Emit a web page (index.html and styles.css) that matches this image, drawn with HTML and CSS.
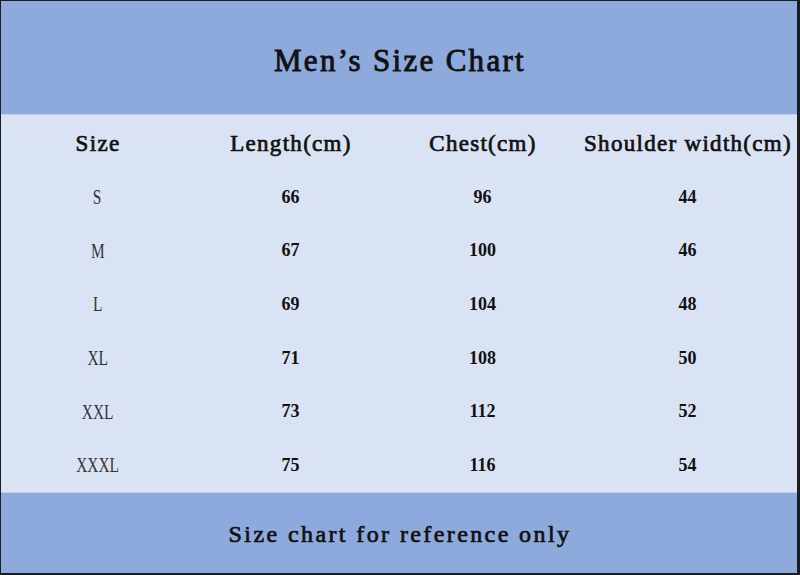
FILE: index.html
```html
<!DOCTYPE html>
<html lang="en">
<head>
<meta charset="utf-8">
<title>Men's Size Chart</title>
<link rel="stylesheet" href="styles.css">
</head>
<body>
<div class="chart">
  <header class="band band-top">
    <h1 class="title">Men’s Size Chart</h1>
  </header>
  <div class="table">
    <div class="cell head">Size</div>
    <div class="cell head">Length(cm)</div>
    <div class="cell head">Chest(cm)</div>
    <div class="cell head">Shoulder width(cm)</div>

    <div class="cell size"><span>S</span></div>
    <div class="cell num">66</div>
    <div class="cell num">96</div>
    <div class="cell num">44</div>

    <div class="cell size"><span>M</span></div>
    <div class="cell num">67</div>
    <div class="cell num">100</div>
    <div class="cell num">46</div>

    <div class="cell size"><span>L</span></div>
    <div class="cell num">69</div>
    <div class="cell num">104</div>
    <div class="cell num">48</div>

    <div class="cell size"><span>XL</span></div>
    <div class="cell num">71</div>
    <div class="cell num">108</div>
    <div class="cell num">50</div>

    <div class="cell size"><span>XXL</span></div>
    <div class="cell num">73</div>
    <div class="cell num">112</div>
    <div class="cell num">52</div>

    <div class="cell size"><span>XXXL</span></div>
    <div class="cell num">75</div>
    <div class="cell num">116</div>
    <div class="cell num">54</div>
  </div>
  <footer class="band band-bottom">
    <p class="note">Size chart for reference only</p>
  </footer>
</div>
</body>
</html>
```

FILE: styles.css
```css
html, body {
  margin: 0;
  padding: 0;
  background: #1a1a1a;
}

.chart {
  width: 800px;
  height: 575px;
  box-sizing: border-box;
  border-style: solid;
  border-color: #1c1c1c;
  border-width: 1px 3px 2px 1px;
  display: flex;
  flex-direction: column;
  color: #111;
  font-family: "Liberation Serif", "DejaVu Serif", serif;
  background: #dae3f3;
}

.band {
  background: #8eaadc;
  display: flex;
  align-items: center;
  justify-content: center;
}

.band-top {
  height: 114px;
  border-bottom: 1px solid #c3d0ea;
  box-sizing: border-box;
  padding-top: 6px;
}

.band-bottom {
  height: 81px;
  border-top: 1px solid #c3d0ea;
  box-sizing: border-box;
  padding-top: 2px;
}

.title {
  margin: 0;
  font-size: 31px;
  font-weight: normal;
  letter-spacing: 2.3px;
  line-height: 1;
  padding-left: 2px;
  -webkit-text-stroke: 0.9px #111;
}

.note {
  margin: 0;
  font-size: 24px;
  letter-spacing: 2.4px;
  line-height: 1;
  padding-left: 2px;
  -webkit-text-stroke: 0.7px #111;
}

.table {
  height: 377px;
  box-sizing: border-box;
  padding-top: 2px;
  display: grid;
  grid-template-columns: 193px 193px 191px 1fr;
  grid-template-rows: repeat(7, 1fr);
}

.cell {
  display: flex;
  align-items: center;
  justify-content: center;
  white-space: nowrap;
}

.head {
  font-size: 23px;
  letter-spacing: 1.3px;
  padding-left: 1px;
  -webkit-text-stroke: 0.7px #111;
}

.size span {
  display: inline-block;
  font-size: 22px;
  color: #333;
  transform: scaleX(0.7);
}

.num {
  font-size: 18px;
  font-weight: bold;
}
```
